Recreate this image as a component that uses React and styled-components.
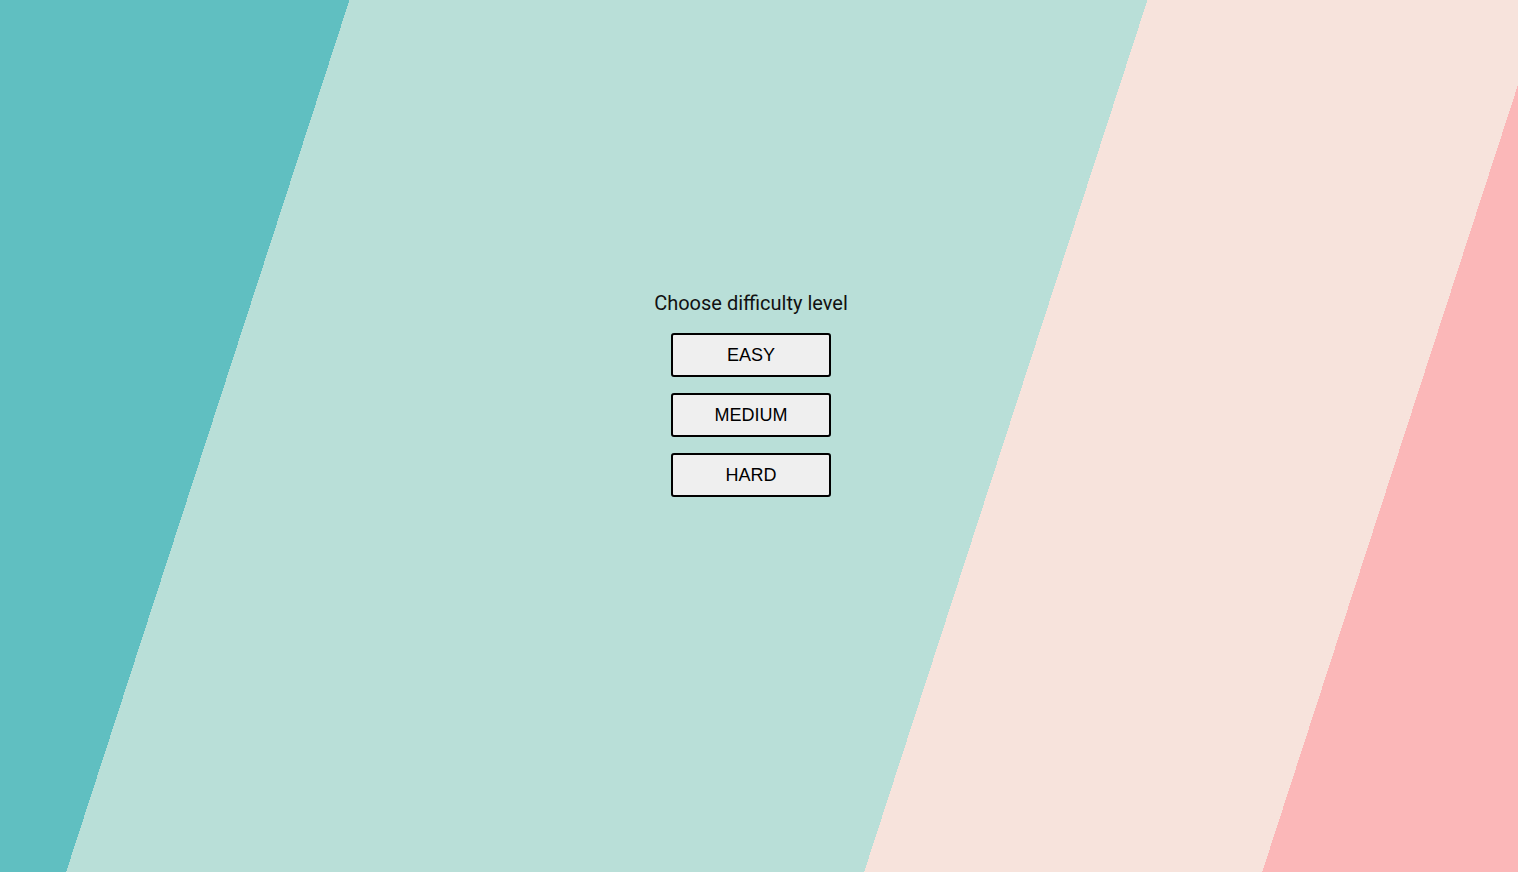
import styled, { createGlobalStyle } from 'styled-components';

const GlobalStyle = createGlobalStyle`
    html, body {
        margin: 0;
        padding: 0;
    }
    body {
        font-family: Roboto, "Liberation Sans", sans-serif;
    }
`;

const Page = styled.div`
    width: 100%;
    min-height: 100vh;
    background: linear-gradient(
        108deg,
        #60bfc1 0%,
        #60bfc1 19.4%,
        #b9dfd8 19.4%,
        #b9dfd8 63.7%,
        #f7e3dc 63.7%,
        #f7e3dc 85.8%,
        #fbb7b8 85.8%,
        #fbb7b8 100%
    );
    display: flex;
    flex-direction: column;
    align-items: center;
    padding: 291px 16px 0 0;
    box-sizing: border-box;
`;

const Title = styled.h2`
    margin: 0 0 18px;
    font-family: Roboto, sans-serif;
    font-weight: 400;
    font-size: 20px;
    line-height: 24px;
    color: #111;
`;

const Levels = styled.div`
    display: flex;
    flex-direction: column;
    gap: 16px;
`;

const LevelButton = styled.button`
    width: 160px;
    height: 44px;
    border: 2px solid #000;
    border-radius: 3px;
    background-color: #efefef;
    font-family: "Liberation Sans", Arial, sans-serif;
    font-size: 18px;
    color: #000;
    cursor: pointer;
    padding: 0;
`;

const levels = ['EASY', 'MEDIUM', 'HARD'];

export default function App() {
    return (
        <>
            <GlobalStyle />
            <Page>
                <Title>Choose difficulty level</Title>
                <Levels>
                    {levels.map(level => (
                        <LevelButton key={level}>{level}</LevelButton>
                    ))}
                </Levels>
            </Page>
        </>
    );
}
